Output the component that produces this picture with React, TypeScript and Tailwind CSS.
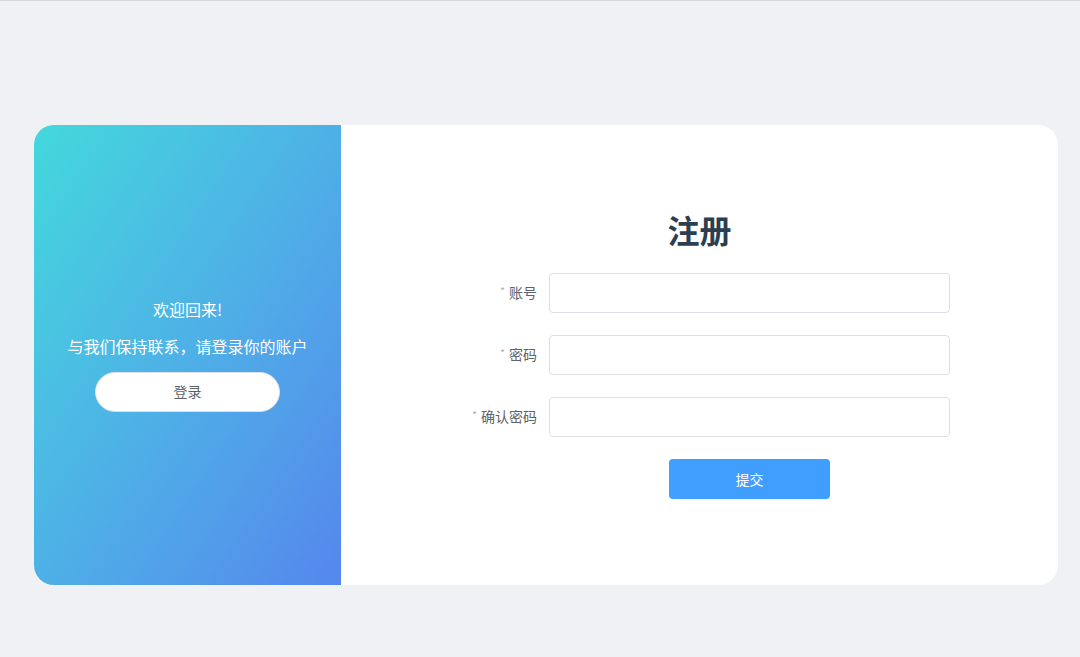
import React from "react";

const font = { fontFamily: '"Noto Sans CJK SC", "Microsoft YaHei", sans-serif' };

function Row({ label }: { label: string }) {
  return (
    <div className="flex items-center h-10">
      <label className="w-[100px] pr-3 flex justify-end items-center text-[14px] text-[#606266] -mt-[2px]">
        <span className="text-[10px] text-[#b8a898] mr-1 -mt-1">*</span>
        {label}
      </label>
      <input className="w-[401px] h-10 border border-[#dcdfe6] rounded-[4px] outline-none px-3 bg-white" />
    </div>
  );
}

export default function App() {
  return (
    <div className="w-[1080px] h-[657px] bg-[#f0f1f5] border-t border-[#d8d8d8] overflow-hidden" style={font}>
      <div className="ml-[34px] mt-[124px] w-[1024px] h-[460px] flex">
        <div className="w-[307px] h-full rounded-l-[20px] bg-gradient-to-br from-[#43d8dc] to-[#5586ed] flex flex-col items-center justify-center pb-[2px] text-white">
          <p className="h-6 leading-6 text-[16px]">欢迎回来!</p>
          <p className="h-6 leading-6 text-[16px] mt-[13px]">与我们保持联系，请登录你的账户</p>
          <button className="mt-[14px] w-[185px] h-10 rounded-full bg-white border border-[#dcdfe6] text-[14px] text-[#606266]">
            登录
          </button>
        </div>
        <div className="flex-1 h-full bg-white rounded-r-[20px] flex flex-col items-center justify-center pt-[2px]">
          <h1 className="h-10 leading-[32px] text-[32px] font-bold text-[#2c3e50] mb-5">注册</h1>
          <div className="flex flex-col gap-[22px] w-[501px]">
            <Row label="账号" />
            <Row label="密码" />
            <Row label="确认密码" />
            <div className="flex">
              <div className="w-[100px]" />
              <div className="w-[401px] flex justify-center">
                <button className="w-[161px] h-10 rounded-[4px] bg-[#409eff] text-white text-[14px]">提交</button>
              </div>
            </div>
          </div>
        </div>
      </div>
    </div>
  );
}
